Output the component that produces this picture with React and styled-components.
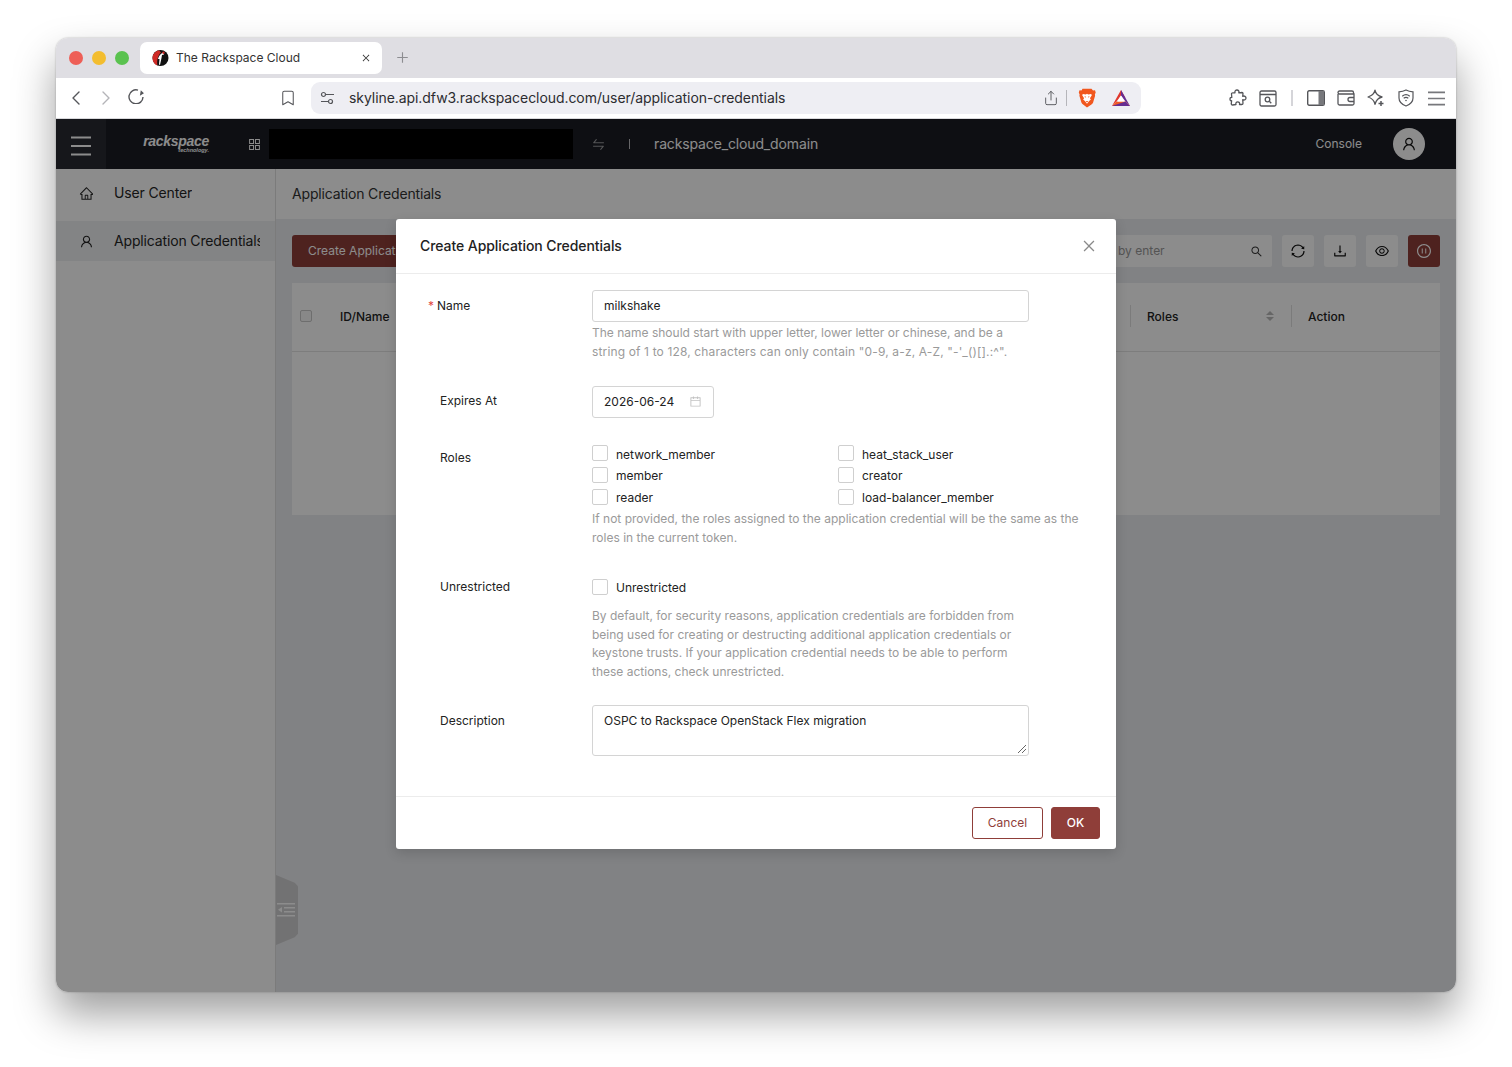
import React from 'react';
import styled, { createGlobalStyle } from 'styled-components';
import {
  AiOutlineHome,
  AiOutlineUser,
  AiOutlineSearch,
  AiOutlineDownload,
  AiOutlineEye,
  AiOutlineSync,
  AiOutlineCalendar,
  AiOutlineClose,
  AiOutlineAppstore,
  AiOutlineSwap,
  AiOutlinePauseCircle,
  AiOutlinePlus,
} from 'react-icons/ai';
import { ChevronLeft, ChevronRight, Bookmark, Share } from 'lucide-react';

const GlobalStyle = createGlobalStyle`
  html, body {
    margin: 0;
    background: #fff;
    font-family: Inter, "Liberation Sans", sans-serif;
    color: #222;
  }
  * {
    box-sizing: border-box;
  }
`;

const Page = styled.div`
  width: 1512px;
  height: 1067px;
  padding: 38px 56px 75px;
  overflow: hidden;
`;

const Window = styled.div`
  display: flex;
  flex-direction: column;
  height: 954px;
  border-radius: 12px;
  overflow: hidden;
  background: #fff;
  box-shadow: 0 22px 42px rgba(0, 0, 0, 0.38), 0 0 2px rgba(0, 0, 0, 0.3);
`;

const TabStrip = styled.div`
  display: flex;
  align-items: flex-start;
  height: 40px;
  padding: 4px 0 0 13px;
  background: #dfdee3;
`;

const Light = styled.span`
  width: 14px;
  height: 14px;
  margin: 9px 9px 0 0;
  border-radius: 50%;
  background: ${(p) => p.$color};
`;

const Tab = styled.div`
  display: flex;
  align-items: center;
  width: 242px;
  height: 32px;
  margin-left: 2px;
  padding: 0 11px;
  border-radius: 7px;
  background: #fff;
  font-size: 12px;
  color: #333;
`;

const TabTitle = styled.span`
  flex: 1;
  margin-left: 7px;
  padding-bottom: 2px;
`;

const NewTab = styled.span`
  display: flex;
  margin: 8px 0 0 13px;
  font-size: 15px;
  color: #8d8d91;
`;

const Toolbar = styled.div`
  display: flex;
  align-items: center;
  height: 41px;
  background: #fff;
  border-bottom: 1px solid #d9d9dc;
  color: #55565a;
`;

const NavButton = styled.span`
  display: flex;
  justify-content: center;
  width: 30px;
  color: ${(p) => (p.$muted ? '#b4b4b8' : '#55565a')};
`;

const NavGroup = styled.div`
  display: flex;
  margin-left: 5px;
`;

const BookmarkSlot = styled.span`
  display: flex;
  margin-left: 128px;
  width: 22px;
`;

const UrlBar = styled.div`
  display: flex;
  align-items: center;
  width: 830px;
  height: 32px;
  margin-left: 10px;
  padding: 0 5px 0 9px;
  border-radius: 9px;
  background: #eeeef3;
`;

const UrlText = styled.span`
  flex: 1;
  margin-left: 14px;
  padding-bottom: 2px;
  font-size: 14px;
  letter-spacing: -0.065px;
  color: #2c2c30;
`;

const UrlDivider = styled.span`
  width: 1px;
  height: 16px;
  margin: 0 11px 0 7px;
  background: #b5b5ba;
`;

const ExtensionSlot = styled.span`
  display: flex;
  justify-content: center;
  width: 30px;
  margin-left: ${(p) => p.$gap || 0}px;
`;

const BrowserIcons = styled.div`
  display: flex;
  align-items: center;
  margin-left: 82px;
`;

const ToolDivider = styled.span`
  width: 2px;
  height: 16px;
  margin: 0 8px;
  background: #d5d5d9;
`;

const AppArea = styled.div`
  position: relative;
  display: flex;
  flex: 1;
  flex-direction: column;
  min-height: 0;
`;

const Header = styled.header`
  display: flex;
  align-items: center;
  height: 50px;
  background: #1b1d24;
  color: #fff;
`;

const MenuSlot = styled.div`
  display: flex;
  align-items: center;
  justify-content: center;
  width: 50px;
  height: 100%;
  padding-top: 3px;
  background: #282b32;
`;

const Logo = styled.div`
  display: flex;
  flex-direction: column;
  align-items: flex-end;
  width: 65px;
  margin-left: 38px;
  line-height: 1;
`;

const LogoWord = styled.span`
  font-family: "Liberation Sans", sans-serif;
  font-size: 14px;
  font-weight: 700;
  font-style: italic;
  letter-spacing: -0.3px;
`;

const LogoSub = styled.span`
  margin-top: 0;
  font-family: "Liberation Sans", sans-serif;
  font-size: 5.5px;
  font-weight: 700;
  font-style: italic;
`;

const ProjectIcon = styled.span`
  display: flex;
  margin-left: 38px;
  font-size: 15px;
`;

const Redacted = styled.div`
  width: 304px;
  height: 30px;
  margin-left: 7px;
  background: #000;
`;

const SwapIcon = styled.span`
  display: flex;
  margin-left: 18px;
  font-size: 15px;
  opacity: 0.55;
`;

const HeaderDivider = styled.span`
  width: 1px;
  height: 10px;
  margin: 0 24px 0 23px;
  background: #fff;
  opacity: 0.7;
`;

const DomainName = styled.span`
  flex: 1;
  padding-bottom: 2px;
  font-size: 14px;
  letter-spacing: -0.14px;
`;

const ConsoleLink = styled.span`
  margin-right: 31px;
  padding-bottom: 2px;
  font-size: 12px;
`;

const Avatar = styled.span`
  display: flex;
  align-items: center;
  justify-content: center;
  width: 32px;
  height: 32px;
  margin-right: 31px;
  border-radius: 50%;
  background: #fff;
  color: #111;
  font-size: 16px;
`;

const Body = styled.div`
  display: flex;
  flex: 1;
  min-height: 0;
`;

const Sidebar = styled.aside`
  width: 220px;
  padding-top: 4px;
  background: #fff;
  border-right: 1px solid #e0e0e0;
`;

const SideItem = styled.div`
  display: flex;
  align-items: center;
  height: 40px;
  margin-bottom: 8px;
  padding: 0 15px 0 23px;
  background: ${(p) => (p.$active ? '#eef0f2' : 'transparent')};
  font-size: 14px;
  color: #262626;
`;

const SideIcon = styled.span`
  display: flex;
  flex-shrink: 0;
  width: 35px;
  font-size: 15px;
`;

const SideLabel = styled.span`
  min-width: 0;
  padding-bottom: 2px;
  overflow: hidden;
  white-space: nowrap;
  letter-spacing: -0.15px;
`;

const Main = styled.main`
  position: relative;
  flex: 1;
  background: #ecedf0;
`;

const Crumb = styled.div`
  display: flex;
  align-items: center;
  height: 50px;
  padding: 0 0 2px 16px;
  background: #fff;
  font-size: 14px;
  letter-spacing: -0.17px;
  color: #333;
`;

const Content = styled.div`
  padding: 16px;
`;

const ActionRow = styled.div`
  display: flex;
  align-items: center;
  gap: 10px;
  margin-bottom: 16px;
`;

const PrimaryAction = styled.div`
  display: flex;
  align-items: center;
  height: 32px;
  padding: 0 16px 2px;
  border-radius: 3px;
  background: #8f3e39;
  color: #fff;
  font-size: 12px;
  margin-right: auto;
  white-space: nowrap;
`;

const SearchBox = styled.div`
  display: flex;
  align-items: center;
  justify-content: space-between;
  width: 300px;
  height: 32px;
  padding: 0 9px 0 146px;
  border-radius: 2px;
  background: #fff;
  font-size: 12px;
  color: #999;
`;

const SearchHint = styled.span`
  padding-bottom: 2px;
`;

const SearchIcon = styled.span`
  display: flex;
  font-size: 13px;
  color: #333;
`;

const IconButton = styled.span`
  display: flex;
  align-items: center;
  justify-content: center;
  width: 32px;
  height: 32px;
  border-radius: 3px;
  background: ${(p) => (p.$danger ? '#8f3e39' : '#fff')};
  color: ${(p) => (p.$danger ? '#fff' : '#111')};
  font-size: 16px;
`;

const TablePanel = styled.div`
  height: 232px;
  background: #fff;
`;

const TableHead = styled.div`
  display: flex;
  align-items: center;
  height: 69px;
  padding: 0 0 2px 8px;
  border-bottom: 1px solid #e4e4e4;
  font-size: 12px;
  font-weight: 500;
  color: #222;
`;

const HeadCheck = styled.span`
  width: 12px;
  height: 12px;
  margin-right: 28px;
  border: 1px solid #c8c8c8;
  border-radius: 2px;
  background: #f7f7f7;
`;

const HeadCell = styled.span`
  width: ${(p) => p.$width}px;
`;

const HeadDivider = styled.span`
  width: 1px;
  height: 22px;
  margin-right: 16px;
  background: #e0e0e0;
`;

const SortMark = styled.span`
  display: flex;
  flex-direction: column;
  gap: 2px;
  margin-right: 17px;
  &::before,
  &::after {
    content: '';
    border-left: 4px solid transparent;
    border-right: 4px solid transparent;
  }
  &::before {
    border-bottom: 4px solid #bbb;
  }
  &::after {
    border-top: 4px solid #bbb;
  }
`;

const SideToggle = styled.div`
  position: absolute;
  left: 0;
  top: 706px;
  display: flex;
  align-items: center;
  justify-content: flex-end;
  width: 22px;
  height: 70px;
  padding-right: 3px;
  background: #d0d0d2;
  clip-path: polygon(0 0, 85% 11%, 100% 16%, 100% 84%, 85% 89%, 0 100%);
`;

const Mask = styled.div`
  position: absolute;
  inset: 0;
  display: flex;
  justify-content: center;
  padding-top: 100px;
  background: rgba(0, 0, 0, 0.45);
`;

const Modal = styled.div`
  display: flex;
  flex-direction: column;
  width: 720px;
  height: 630px;
  border-radius: 3px;
  background: #fff;
  box-shadow: 0 4px 12px rgba(0, 0, 0, 0.15);
`;

const ModalHead = styled.div`
  display: flex;
  align-items: center;
  justify-content: space-between;
  height: 55px;
  padding: 0 19px 0 24px;
  border-bottom: 1px solid #ececec;
`;

const ModalTitle = styled.h2`
  margin: 0;
  padding-bottom: 2px;
  font-size: 14px;
  font-weight: 500;
  letter-spacing: -0.07px;
  color: #222;
`;

const CloseButton = styled.span`
  display: flex;
  font-size: 16px;
  color: #8a8a8a;
`;

const ModalBody = styled.div`
  flex: 1;
  padding-top: 16px;
`;

const FormRow = styled.div`
  display: flex;
  margin-bottom: ${(p) => p.$gap}px;
`;

const LabelCol = styled.div`
  display: flex;
  width: 196px;
  padding-left: ${(p) => (p.$required ? 32 : 44)}px;
  padding-top: ${(p) => p.$top}px;
  font-size: 12px;
  line-height: 16px;
  color: #222;
`;

const RequiredMark = styled.span`
  width: 9px;
  color: #e2483d;
`;

const Control = styled.div`
  flex: 1;
`;

const TextInput = styled.div`
  display: flex;
  align-items: center;
  width: 437px;
  height: 32px;
  padding: 0 11px 2px;
  border: 1px solid #d4d4d4;
  border-radius: 3px;
  font-size: 12px;
  color: #222;
`;

const DateInput = styled(TextInput)`
  justify-content: space-between;
  width: 122px;
  padding-right: 11px;
`;

const DateIcon = styled.span`
  display: flex;
  font-size: 13px;
  color: #c2c2c2;
`;

const Help = styled.p`
  margin: 0;
  padding-top: ${(p) => p.$top || 0}px;
  max-width: ${(p) => p.$width}px;
  font-size: 12px;
  line-height: 18.7px;
  color: #9a9a9a;
`;

const HelpWide = styled.span`
  letter-spacing: 0.14px;
`;

const RoleGrid = styled.div`
  display: grid;
  grid-template-columns: 246px 246px;
  grid-auto-rows: 21.7px;
  padding-top: 1px;
`;

const CheckItem = styled.label`
  display: flex;
  align-items: center;
  font-size: 12px;
  color: #222;
`;

const Box = styled.span`
  width: 16px;
  height: 16px;
  margin: 0 8px 2px 0;
  border: 1px solid #cfcfcf;
  border-radius: 2px;
  background: #fff;
`;

const TextArea = styled.div`
  position: relative;
  width: 437px;
  height: 51px;
  padding: 7px 11px;
  border: 1px solid #d4d4d4;
  border-radius: 3px;
  font-size: 12px;
  line-height: 16px;
  color: #222;
`;

const ResizeGrip = styled.svg`
  position: absolute;
  right: 1px;
  bottom: 1px;
`;

const ModalFoot = styled.div`
  display: flex;
  align-items: center;
  justify-content: flex-end;
  gap: 8px;
  height: 53px;
  padding-right: 16px;
  border-top: 1px solid #ececec;
`;

const FootButton = styled.span`
  display: flex;
  align-items: center;
  justify-content: center;
  width: ${(p) => p.$width}px;
  height: 32px;
  padding-bottom: 2px;
  border: 1px solid #8f3e39;
  border-radius: 3px;
  background: ${(p) => (p.$primary ? '#8f3e39' : '#fff')};
  color: ${(p) => (p.$primary ? '#fff' : '#8f3e39')};
  font-size: 12px;
  font-weight: ${(p) => (p.$primary ? 500 : 400)};
`;

function MenuLines ({ size, color, width, spread }) {
  return (
    <svg width={size} height={size} viewBox='0 0 20 20' fill='none' stroke={color} strokeWidth={width}>
      <path d={`M0 ${10 - spread}h20M0 10h20M0 ${10 + spread}h20`} />
    </svg>
  );
}

function OutdentIcon () {
  return (
    <svg width='18' height='16' viewBox='0 0 18 16' fill='#fff'>
      <rect y='1' width='18' height='1.500' />
      <rect x='7' y='5' width='11' height='1.500' />
      <rect x='7' y='9' width='11' height='1.500' />
      <rect y='13' width='18' height='1.500' />
      <path d='M1 7.700L5 5v5.500z' />
    </svg>
  );
}

function Favicon () {
  return (
    <svg width='18' height='18' viewBox='0 0 18 18'>
      <circle cx='9.500' cy='9' r='8' fill='#111' />
      <path d='M8 1.200C4 2 1.500 5.500 1.500 9c0 3.500 2 6.500 5 7.500C5.500 12 7 6 10 3.500z' fill='#cf2a26' />
      <path d='M7 10c.5-2.500 2-4.500 3.500-5.500l2-1.500.5 2.500-2 .5L10.500 9 9 16l-1-.5L8.500 10z' fill='#fff' />
      <circle cx='12.500' cy='3.800' r='1.200' fill='#cf2a26' />
    </svg>
  );
}

function ReloadIcon () {
  return (
    <svg width='18' height='18' viewBox='0 -1.500 18 18' fill='none' stroke='#55565a' strokeWidth='1.400'>
      <path d='M16 9.500A7 7 0 1 1 11 2.600' />
      <path d='M12.500 2.500l4.300-.5-.6 4.800z' fill='#55565a' stroke='none' transform='rotate(50 14 4.500) translate(0 1)' />
    </svg>
  );
}

function BraveIcon () {
  return (
    <svg width='18' height='20' viewBox='0 0 18 20'>
      <path d='M4.500 .8h9l1.500 1.700 2 -.3.7 2.300-.8 2 .2 1.200-2 6.800c-.3 1-1 1.700-2 2.300L9 19.500l-3.600-2.700c-1-.6-1.700-1.300-2-2.300l-2-6.800.2-1.200-.8-2 .7-2.300 2 .3z' fill='#f1571e' />
      <path d='M4.800 6l3 .4L9 5.800l1.200.6 3-.4.600 1.200-1.900 3 1 1.400-1.800 1.500L9 15.700l-2.100-2.600-1.800-1.500 1-1.400-1.900-3z' fill='#fff' />
      <path d='M6.500 8.200l1.600.5-1 1zM11.500 8.200l-1.600.5 1 1zM7.700 13h2.600L9 14.500z' fill='#f1571e' />
    </svg>
  );
}

function BatIcon () {
  return (
    <svg width='18' height='16' viewBox='0 0 18 16'>
      <path d='M9 0l4.500 8L9 5.500 4.500 11.500 0 16z' fill='#e0382e' />
      <path d='M9 0l9 16-4.500-4.500L9 5.500z' fill='#662d91' />
      <path d='M0 16l4.500-4.500h9L18 16z' fill='#f15a22' />
      <path d='M13.500 11.500L18 16H0z' fill='#662d91' />
      <path d='M9 5.500l3.600 6H5.400z' fill='#fff' />
    </svg>
  );
}

function TuneIcon () {
  return (
    <svg width='15' height='15' viewBox='0 0 15 15' fill='none' stroke='#55565a' strokeWidth='1.200'>
      <circle cx='3.500' cy='3.500' r='2' />
      <path d='M6 3.500h8M1 10.500h7' />
      <circle cx='10.500' cy='10.500' r='2' />
    </svg>
  );
}

function PuzzleIcon () {
  return (
    <svg width='18' height='18' viewBox='0 0 18 18' fill='none' stroke='#55565a' strokeWidth='1.300' strokeLinejoin='round'>
      <path d='M6 3.800C5.500 1.800 6.800 1 8 1s2.500 1 1.800 2.800L13 3.500c.8 0 1 .4 1 1l-.3 2.800c1.800-.8 3.300.3 3.300 1.700s-1.500 2.600-3.300 1.700l.3 3.500c0 1-.5 1.300-1.300 1.300h-2.200c.5-1.700-.5-2.700-1.800-2.700s-2.300 1-1.700 2.700l-3.500.5c-.9 0-1.300-.6-1.200-1.300l.3-3c-1.300.5-1.600-.7-1.600-1.600S1.500 8 2.800 8.500L2.500 5c0-.8.400-1.200 1.200-1.200z' />
    </svg>
  );
}

function ReaderIcon () {
  return (
    <svg width='18' height='17' viewBox='0 0 18 17' fill='none' stroke='#55565a' strokeWidth='1.300'>
      <rect x='1' y='1' width='16' height='15' rx='1.500' />
      <path d='M1 4.500h16' />
      <circle cx='8.500' cy='9.500' r='2.300' />
      <path d='M10.300 11.300l2 2' />
    </svg>
  );
}

function PanelIcon () {
  return (
    <svg width='18' height='16' viewBox='0 0 18 16'>
      <rect x='.7' y='.7' width='16.600' height='14.600' rx='1.500' fill='none' stroke='#55565a' strokeWidth='1.400' />
      <rect x='11.500' y='1' width='5.500' height='14' fill='#77787c' />
    </svg>
  );
}

function WalletIcon () {
  return (
    <svg width='18' height='16' viewBox='0 0 18 16' fill='none' stroke='#55565a' strokeWidth='1.300'>
      <path d='M1 4V13.500A1.500 1.500 0 0 0 2.500 15h13a1.500 1.500 0 0 0 1.500-1.500V4H2.500A1.500 1.500 0 0 1 1 2.500 1.500 1.500 0 0 1 2.500 1H15a1.500 1.500 0 0 1 1.500 1.500V4' />
      <path d='M17 7.500h-4a1.800 1.800 0 0 0 0 4h4' />
    </svg>
  );
}

function SparkIcon () {
  return (
    <svg width='18' height='18' viewBox='0 0 18 18' fill='none' stroke='#55565a' strokeWidth='1.300' strokeLinejoin='round'>
      <path d='M8 1.200c.6 3.500 2.700 5.600 7 6.800-1.800.5-3.300 1.200-4.300 2.200-1.300 1.200-2.100 2.900-2.700 5.100-.7-3.600-3-6.100-7-7.300 4-1.200 6.300-3.300 7-6.800z' />
      <path d='M14 12v5M11.500 14.500h5' strokeWidth='1.500' />
    </svg>
  );
}

function ShieldIcon () {
  return (
    <svg width='16' height='18' viewBox='0 0 16 18' fill='none' stroke='#55565a' strokeWidth='1.200'>
      <path d='M8 1c2 1 4 1.600 7 1.800V9c0 4-3 6.500-7 8-4-1.500-7-4-7-8V2.800C4 2.600 6 2 8 1z' />
      <path d='M4.200 7.200c2.300-1.800 5.300-1.800 7.600 0M5.700 9.200c1.400-1 3.200-1 4.600 0' />
      <circle cx='8' cy='11.500' r='.8' fill='#55565a' stroke='none' />
    </svg>
  );
}

const roles = [
  'network_member',
  'heat_stack_user',
  'member',
  'creator',
  'reader',
  'load-balancer_member',
];

function CredentialModal () {
  return (
    <Modal>
      <ModalHead>
        <ModalTitle>Create Application Credentials</ModalTitle>
        <CloseButton><AiOutlineClose /></CloseButton>
      </ModalHead>
      <ModalBody>
        <FormRow $gap={25}>
          <LabelCol $required $top={8}><RequiredMark>*</RequiredMark>Name</LabelCol>
          <Control>
            <TextInput>milkshake</TextInput>
            <Help $width={430} $top={2}>
              The name should start with upper letter, lower letter or chinese, and be a <HelpWide>string of 1 to 128, characters can only contain "0-9, a-z, A-Z, "-'_()[].:^".</HelpWide>
            </Help>
          </Control>
        </FormRow>
        <FormRow $gap={24}>
          <LabelCol $top={7}>Expires At</LabelCol>
          <Control>
            <DateInput>
              2026-06-24
              <DateIcon><AiOutlineCalendar /></DateIcon>
            </DateInput>
          </Control>
        </FormRow>
        <FormRow $gap={31}>
          <LabelCol $top={8}>Roles</LabelCol>
          <Control>
            <RoleGrid>
              {roles.map((role) => (
                <CheckItem key={role}><Box />{role}</CheckItem>
              ))}
            </RoleGrid>
            <Help $width={490} $top={2}>
              If not provided, the roles assigned to the application credential will be the same as the roles in the current token.
            </Help>
          </Control>
        </FormRow>
        <FormRow $gap={23}>
          <LabelCol $top={0}>Unrestricted</LabelCol>
          <Control>
            <CheckItem><Box />Unrestricted</CheckItem>
            <Help $width={430} $top={10}>
              By default, for security reasons, application credentials are forbidden from being used for creating or destructing additional application credentials or keystone trusts. If your application credential needs to be able to perform these actions, check unrestricted.
            </Help>
          </Control>
        </FormRow>
        <FormRow $gap={0}>
          <LabelCol $top={8}>Description</LabelCol>
          <Control>
            <TextArea>
              OSPC to Rackspace OpenStack Flex migration
              <ResizeGrip width='10' height='10' viewBox='0 0 10 10' stroke='#666' strokeWidth='1' fill='none'>
                <path d='M1 9l8-8M5 9l4-4' />
              </ResizeGrip>
            </TextArea>
          </Control>
        </FormRow>
      </ModalBody>
      <ModalFoot>
        <FootButton $width={71}>Cancel</FootButton>
        <FootButton $width={49} $primary>OK</FootButton>
      </ModalFoot>
    </Modal>
  );
}

function BrowserChrome () {
  return (
    <>
      <TabStrip>
        <Light $color='#ee5f57' />
        <Light $color='#f3bd2f' />
        <Light $color='#5ac24f' />
        <Tab>
          <Favicon />
          <TabTitle>The Rackspace Cloud</TabTitle>
          <AiOutlineClose size={10} color='#333' />
        </Tab>
        <NewTab><AiOutlinePlus /></NewTab>
      </TabStrip>
      <Toolbar>
        <NavGroup>
          <NavButton><ChevronLeft size={24} strokeWidth={1.4} /></NavButton>
          <NavButton $muted><ChevronRight size={24} strokeWidth={1.4} /></NavButton>
          <NavButton><ReloadIcon /></NavButton>
        </NavGroup>
        <BookmarkSlot><Bookmark size={18} strokeWidth={1.4} /></BookmarkSlot>
        <UrlBar>
          <TuneIcon />
          <UrlText>skyline.api.dfw3.rackspacecloud.com/user/application-credentials</UrlText>
          <Share size={16} strokeWidth={1.4} />
          <UrlDivider />
          <BraveIcon />
          <ExtensionSlot $gap={10}><BatIcon /></ExtensionSlot>
        </UrlBar>
        <BrowserIcons>
          <ExtensionSlot><PuzzleIcon /></ExtensionSlot>
          <ExtensionSlot><ReaderIcon /></ExtensionSlot>
          <ToolDivider />
          <ExtensionSlot><PanelIcon /></ExtensionSlot>
          <ExtensionSlot><WalletIcon /></ExtensionSlot>
          <ExtensionSlot><SparkIcon /></ExtensionSlot>
          <ExtensionSlot><ShieldIcon /></ExtensionSlot>
          <ExtensionSlot><MenuLines size={17} color='#77787c' width={1.8} spread={7.2} /></ExtensionSlot>
        </BrowserIcons>
      </Toolbar>
    </>
  );
}

function App () {
  return (
    <>
      <GlobalStyle />
      <Page>
        <Window>
          <BrowserChrome />
          <AppArea>
            <Header>
              <MenuSlot><MenuLines size={20} color='#fff' width={1.8} spread={8.5} /></MenuSlot>
              <Logo>
                <LogoWord>rackspace</LogoWord>
                <LogoSub>technology.</LogoSub>
              </Logo>
              <ProjectIcon><AiOutlineAppstore /></ProjectIcon>
              <Redacted />
              <SwapIcon><AiOutlineSwap /></SwapIcon>
              <HeaderDivider />
              <DomainName>rackspace_cloud_domain</DomainName>
              <ConsoleLink>Console</ConsoleLink>
              <Avatar><AiOutlineUser /></Avatar>
            </Header>
            <Body>
              <Sidebar>
                <SideItem>
                  <SideIcon><AiOutlineHome /></SideIcon>
                  <SideLabel>User Center</SideLabel>
                </SideItem>
                <SideItem $active>
                  <SideIcon><AiOutlineUser /></SideIcon>
                  <SideLabel>Application Credentials</SideLabel>
                </SideItem>
              </Sidebar>
              <Main>
                <Crumb>Application Credentials</Crumb>
                <Content>
                  <ActionRow>
                    <PrimaryAction>Create Application Credentials</PrimaryAction>
                    <SearchBox>
                      <SearchHint>by enter</SearchHint>
                      <SearchIcon><AiOutlineSearch /></SearchIcon>
                    </SearchBox>
                    <IconButton><AiOutlineSync /></IconButton>
                    <IconButton><AiOutlineDownload /></IconButton>
                    <IconButton><AiOutlineEye /></IconButton>
                    <IconButton $danger><AiOutlinePauseCircle /></IconButton>
                  </ActionRow>
                  <TablePanel>
                    <TableHead>
                      <HeadCheck />
                      <HeadCell $width={790}>ID/Name</HeadCell>
                      <HeadDivider />
                      <HeadCell $width={119}>Roles</HeadCell>
                      <SortMark />
                      <HeadDivider />
                      <HeadCell $width={60}>Action</HeadCell>
                    </TableHead>
                  </TablePanel>
                </Content>
                <SideToggle><OutdentIcon /></SideToggle>
              </Main>
            </Body>
            <Mask>
              <CredentialModal />
            </Mask>
          </AppArea>
        </Window>
      </Page>
    </>
  );
}

export default App;
